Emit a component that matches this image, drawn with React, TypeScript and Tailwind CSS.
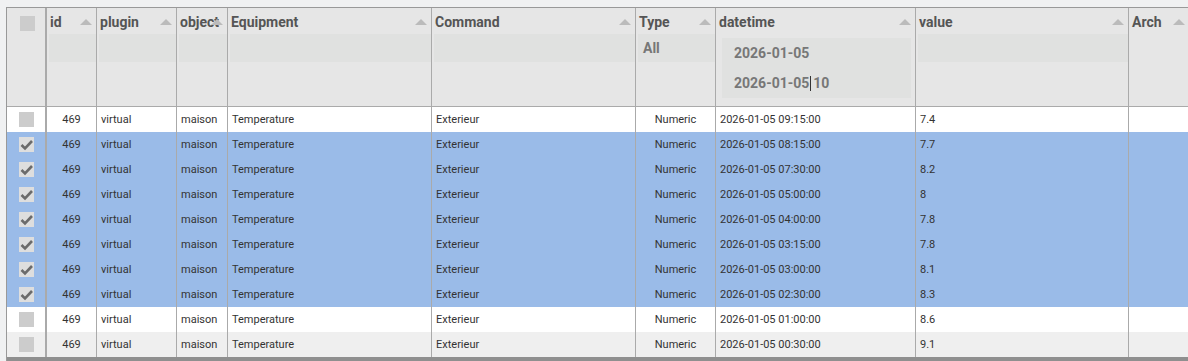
import React from "react";

type Col = { key: string; title: string; w: string; border: string };

const cols: Col[] = [
  { key: "id", title: "id", w: "w-[50px]", border: "border-r" },
  { key: "plugin", title: "plugin", w: "w-[80px]", border: "border-r" },
  { key: "object", title: "object", w: "w-[51px]", border: "border-r" },
  { key: "equipment", title: "Equipment", w: "w-[204px]", border: "border-r" },
  { key: "command", title: "Command", w: "w-[204px]", border: "border-r" },
  { key: "type", title: "Type", w: "w-[80px]", border: "border-r" },
  { key: "datetime", title: "datetime", w: "w-[200px]", border: "border-r" },
  { key: "value", title: "value", w: "w-[213px]", border: "border-r" },
  { key: "arch", title: "Arch", w: "w-[60px]", border: "" },
];

const rows = [
  { t: "09:15:00", v: "7.4", sel: false },
  { t: "08:15:00", v: "7.7", sel: true },
  { t: "07:30:00", v: "8.2", sel: true },
  { t: "05:00:00", v: "8", sel: true },
  { t: "04:00:00", v: "7.8", sel: true },
  { t: "03:15:00", v: "7.8", sel: true },
  { t: "03:00:00", v: "8.1", sel: true },
  { t: "02:30:00", v: "8.3", sel: true },
  { t: "01:00:00", v: "8.6", sel: false },
  { t: "00:30:00", v: "9.1", sel: false },
];

function Arrow() {
  return (
    <div className="absolute right-[4px] top-[11px] w-0 h-0 border-l-[6px] border-r-[6px] border-b-[6px] border-l-transparent border-r-transparent border-b-[#bbbbbb]" />
  );
}

function Filter({ k }: { k: string }) {
  if (k === "arch") return null;
  if (k === "datetime") {
    return (
      <div className="mt-[8px] ml-[6px] w-[189px] h-[60px] bg-[#e0e1e0] flex flex-col pl-[12px] text-[14px] font-bold text-[#777777]">
        <div className="h-[30px] flex items-center pt-[1px]">2026-01-05</div>
        <div className="h-[30px] flex items-center pt-[1px]">
          <span>2026-01-05</span>
          <span className="inline-block w-px h-[15px] bg-[#333333] ml-[1px]" />
          <span className="ml-[2px]">10</span>
        </div>
      </div>
    );
  }
  return (
    <div className="mt-[4px] ml-[2px] h-[28px] bg-[#e0e1e0] flex items-center pl-[5px] pt-[1px] text-[14px] font-bold text-[#777777]">
      {k === "type" ? "All" : ""}
    </div>
  );
}

function Check() {
  return (
    <div className="w-[15px] h-[15px] bg-[#dedede] flex items-center justify-center">
      <svg width="15" height="15" viewBox="0 0 15 15">
        <path d="M2.5 8 L6 11.5 L13 4" fill="none" stroke="#6b6b6b" strokeWidth="2.6" strokeLinecap="butt" strokeLinejoin="miter" />
      </svg>
    </div>
  );
}

const cell = "shrink-0 border-r border-[#aaaaaa] flex items-center pt-[2px]";

export default function App() {
  return (
    <div className="w-[1188px] h-[361px] bg-[#f0f1f2] pt-[7px] pl-[6px] overflow-hidden font-['Roboto',sans-serif]">
      <div className="w-[1182px] h-[354px] border-l border-t border-[#999999] flex flex-col overflow-hidden">
        {/* header */}
        <div className="flex h-[99px] shrink-0 bg-[#e6e6e6] border-b border-[#aaaaaa]">
          <div className="w-[40px] shrink-0 border-r-2 border-[#aaaaaa]">
            <div className="mt-[8px] ml-[13px] w-[15px] h-[15px] bg-[#cccccc]" />
          </div>
          {cols.map((c) => (
            <div key={c.key} className={`relative shrink-0 ${c.w} ${c.border} border-[#aaaaaa]`}>
              <div className="pt-[6px] pl-[3px] text-[14px] leading-[16px] font-bold text-[#555555] whitespace-nowrap">
                {c.title}
              </div>
              <Arrow />
              <Filter k={c.key} />
            </div>
          ))}
        </div>
        {/* body */}
        {rows.map((r, i) => {
          const bg = r.sel ? "bg-[#9abbe8]" : i % 2 === 0 ? "bg-white" : "bg-[#efefef]";
          return (
            <div key={i} className={`flex h-[25px] shrink-0 ${bg} text-[11px] text-[#333333]`}>
              <div className="w-[40px] shrink-0 border-r-2 border-[#aaaaaa] flex items-center justify-center">
                {r.sel ? <Check /> : <div className="w-[15px] h-[15px] bg-[#cccccc]" />}
              </div>
              <div className={`w-[50px] ${cell} justify-center`}>469</div>
              <div className={`w-[80px] ${cell} pl-[4px]`}>virtual</div>
              <div className={`w-[51px] ${cell} pl-[4px]`}>maison</div>
              <div className={`w-[204px] ${cell} pl-[4px]`}>Temperature</div>
              <div className={`w-[204px] ${cell} pl-[4px]`}>Exterieur</div>
              <div className={`w-[80px] ${cell} justify-center`}>Numeric</div>
              <div className={`w-[200px] ${cell} pl-[4px]`}>2026-01-05 {r.t}</div>
              <div className={`w-[213px] ${cell} pl-[4px]`}>{r.v}</div>
              <div className="w-[60px] shrink-0" />
            </div>
          );
        })}
        <div className="h-[4px] shrink-0 bg-[#8f8f8f]" />
      </div>
    </div>
  );
}
